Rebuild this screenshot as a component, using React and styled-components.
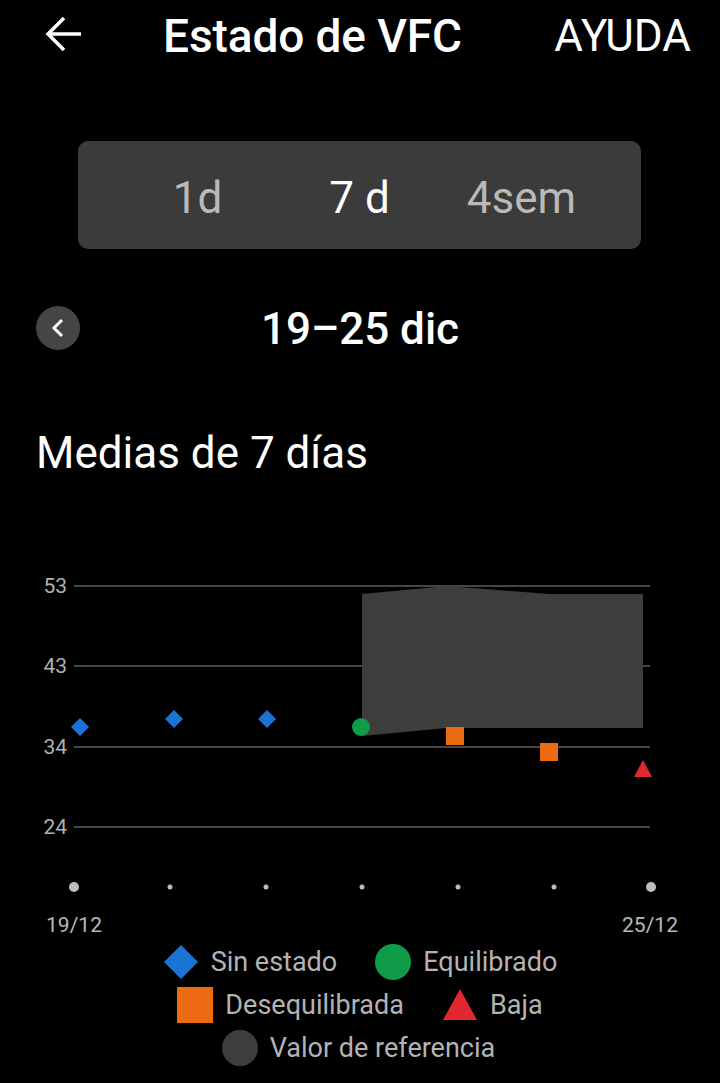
import React from "react";
import styled, { createGlobalStyle } from "styled-components";

const GlobalStyle = createGlobalStyle`
  html, body {
    margin: 0;
    padding: 0;
    background: #000;
  }
  body {
    font-family: Roboto, "Noto Sans", "Liberation Sans", sans-serif;
    color: #fff;
  }
`;

const Page = styled.div`
  width: 720px;
  height: 1083px;
  background: #000;
  overflow: hidden;
`;

const Header = styled.header`
  height: 72px;
  display: flex;
  align-items: center;
  padding: 0 29px 0 45px;
`;

const BackButton = styled.button`
  width: 38px;
  height: 38px;
  padding: 0;
  border: 0;
  background: none;
  color: #fff;
  display: flex;
  align-items: center;
  justify-content: center;
  margin-top: -4px;
`;

const Title = styled.h1`
  margin: 0 0 0 80px;
  font-size: 46px;
  line-height: 46px;
  font-weight: 500;
  letter-spacing: -0.1px;
`;

const Help = styled.span`
  margin-left: auto;
  font-size: 44px;
  line-height: 44px;
  font-weight: 400;
`;

const Segments = styled.div`
  margin: 69px 0 0 78px;
  width: 563px;
  height: 108px;
  box-sizing: border-box;
  padding-top: 6px;
  border-radius: 10px;
  background: #3b3b3b;
  display: flex;
  align-items: center;
  justify-content: center;
`;

const Segment = styled.span`
  width: 162px;
  text-align: center;
  font-size: 44px;
  line-height: 44px;
  color: ${(p) => (p.active ? "#fff" : "#b9b9b9")};
`;

const DateRow = styled.div`
  margin-top: 55px;
  padding: 0 36px;
  display: grid;
  grid-template-columns: 1fr auto 1fr;
  align-items: center;
`;

const RoundButton = styled.button`
  width: 44px;
  height: 44px;
  padding: 0;
  border: 0;
  border-radius: 50%;
  background: #454545;
  display: flex;
  align-items: center;
  justify-content: center;
`;

const Range = styled.div`
  padding-top: 3px;
  font-size: 44px;
  line-height: 44px;
  font-weight: 500;
`;

const SectionTitle = styled.h2`
  margin: 80px 0 0 36px;
  font-size: 44px;
  line-height: 44px;
  font-weight: 400;
`;

const Chart = styled.svg`
  display: block;
  margin-top: 85px;
`;

const Legend = styled.div`
  display: flex;
  flex-direction: column;
  align-items: center;
`;

const LegendRow = styled.div`
  height: 43px;
  display: flex;
  align-items: center;
  gap: 38px;
  margin-left: ${(p) => p.shift || 0}px;
`;

const LegendItem = styled.div`
  display: flex;
  align-items: center;
  gap: 12px;
  font-size: 27px;
  color: #b3b3b3;
`;

const BLUE = "#1a74d6";
const GREEN = "#109b48";
const ORANGE = "#eb6a12";
const RED = "#e0292f";
const REF = "#3d3d3d";

const Marker = ({ kind }) => (
  <svg width="36" height="36" viewBox="0 0 36 36">
    {kind === "diamond" && <polygon points="18,1 35,18 18,35 1,18" fill={BLUE} />}
    {kind === "circle" && <circle cx="18" cy="18" r="18" fill={GREEN} />}
    {kind === "square" && <rect x="0" y="0" width="36" height="36" fill={ORANGE} />}
    {kind === "triangle" && <polygon points="18,2 35,33 1,33" fill={RED} />}
    {kind === "ref" && <circle cx="18" cy="18" r="18" fill={REF} />}
  </svg>
);

const grid = [
  { y: 26, label: "53" },
  { y: 106, label: "43" },
  { y: 187, label: "34" },
  { y: 267, label: "24" },
];

const ticks = [74, 170, 266, 362, 458, 554, 651];

const diamond = (x, y, h = 9) =>
  `${x},${y - h} ${x + h},${y} ${x},${y + h} ${x - h},${y}`;

function HrvChart() {
  return (
    <Chart width="720" height="380" viewBox="0 0 720 380">
      {grid.map((g) => (
        <g key={g.label}>
          <line x1="74" x2="650" y1={g.y} y2={g.y} stroke="#464646" strokeWidth="2" />
          <text
            x="67"
            y={g.y + 7}
            textAnchor="end"
            fontSize="21"
            fill="#b0b0b0"
            fontFamily="Roboto, sans-serif"
          >
            {g.label}
          </text>
        </g>
      ))}

      <polygon
        points="362,34 447,26 549,34 643,34 643,168 447,168 362,176"
        fill={REF}
      />

      <polygon points={diamond(80, 167)} fill={BLUE} />
      <polygon points={diamond(174, 159)} fill={BLUE} />
      <polygon points={diamond(267, 159)} fill={BLUE} />
      <circle cx="361" cy="167" r="9" fill={GREEN} />
      <rect x="446" y="167" width="18" height="18" fill={ORANGE} />
      <rect x="540" y="183" width="18" height="18" fill={ORANGE} />
      <polygon points="643,200 652,217 634,217" fill={RED} />

      {ticks.map((x, i) => (
        <circle
          key={x}
          cx={x}
          cy="327"
          r={i === 0 || i === ticks.length - 1 ? 5 : 2.5}
          fill="#bdbdbd"
        />
      ))}
      <text x="74" y="372" textAnchor="middle" fontSize="21" fill="#b8b8b8" fontFamily="Roboto, sans-serif">
        19/12
      </text>
      <text x="650" y="372" textAnchor="middle" fontSize="21" fill="#b8b8b8" fontFamily="Roboto, sans-serif">
        25/12
      </text>
    </Chart>
  );
}

export default function App() {
  return (
    <Page>
      <GlobalStyle />
      <Header>
        <BackButton aria-label="Atrás">
          <svg width="38" height="38" viewBox="0 0 38 38" fill="none" stroke="#fff" strokeWidth="3.5">
            <path d="M36 19H3" />
            <path d="M19 3L3 19l16 16" />
          </svg>
        </BackButton>
        <Title>Estado de VFC</Title>
        <Help>AYUDA</Help>
      </Header>

      <Segments>
        <Segment>1d</Segment>
        <Segment active>7 d</Segment>
        <Segment>4sem</Segment>
      </Segments>

      <DateRow>
        <RoundButton aria-label="Anterior">
          <svg width="14" height="20" viewBox="0 0 14 20" fill="none" stroke="#fff" strokeWidth="3">
            <path d="M11 2L3 10l8 8" />
          </svg>
        </RoundButton>
        <Range>19–25 dic</Range>
        <span />
      </DateRow>

      <SectionTitle>Medias de 7 días</SectionTitle>

      <HrvChart />

      <Legend>
        <LegendRow>
          <LegendItem>
            <Marker kind="diamond" />
            Sin estado
          </LegendItem>
          <LegendItem>
            <Marker kind="circle" />
            Equilibrado
          </LegendItem>
        </LegendRow>
        <LegendRow>
          <LegendItem>
            <Marker kind="square" />
            Desequilibrada
          </LegendItem>
          <LegendItem>
            <Marker kind="triangle" />
            Baja
          </LegendItem>
        </LegendRow>
        <LegendRow shift={-3}>
          <LegendItem>
            <Marker kind="ref" />
            Valor de referencia
          </LegendItem>
        </LegendRow>
      </Legend>
    </Page>
  );
}
